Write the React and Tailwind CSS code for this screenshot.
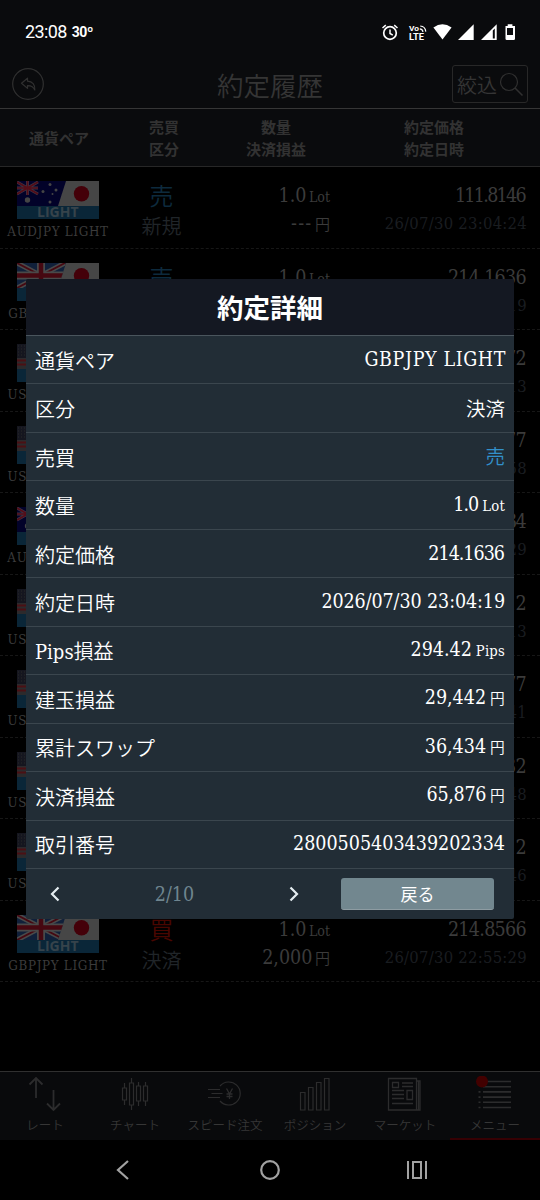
import { clsx } from 'clsx'

const SLAB = 'font-["Roboto_Slab","DejaVu_Serif_Condensed","DejaVu_Serif","Noto_Sans_CJK_JP",serif] [font-stretch:condensed]'

const HISTORY = [
  { base: 'AUD', side: '売', kind: '新規', profit: '---',   price: '111.8146', time: '26/07/30 23:04:24' },
  { base: 'GBP', side: '売', kind: '決済', profit: '65,876', price: '214.1636', time: '26/07/30 23:04:19' },
  { base: 'USD', side: '買', kind: '新規', profit: '---',   price: '162.4172', time: '26/07/30 23:04:13' },
  { base: 'USD', side: '売', kind: '決済', profit: '1,200', price: '162.4177', time: '26/07/30 23:03:58' },
  { base: 'AUD', side: '買', kind: '決済', profit: '3,400', price: '111.8134', time: '26/07/30 23:03:29' },
  { base: 'USD', side: '買', kind: '新規', profit: '---',   price: '162.4212', time: '26/07/30 23:03:13' },
  { base: 'USD', side: '売', kind: '決済', profit: '1,800', price: '162.4277', time: '26/07/30 23:02:41' },
  { base: 'USD', side: '買', kind: '新規', profit: '---',   price: '162.4232', time: '26/07/30 22:59:48' },
  { base: 'USD', side: '売', kind: '決済', profit: '2,100', price: '162.4312', time: '26/07/30 22:57:46' },
  { base: 'GBP', side: '買', kind: '決済', profit: '2,000', price: '214.8566', time: '26/07/30 22:55:29' },
]

const DETAILS = [
  { label: '通貨ペア', value: 'GBPJPY LIGHT', style: 'tracking-[0.6px] -mr-[1px]' },
  { label: '区分', value: '決済', style: 'pt-[3px]' },
  { label: '売買', value: '売', style: 'pt-[3px] text-[#3290ca]' },
  { label: '数量', value: '1.0', unit: 'Lot', style: 'tracking-[-0.9px]' },
  { label: '約定価格', value: '214.1636', style: 'tracking-[-1px] pr-[1px]' },
  { label: '約定日時', value: '2026/07/30 23:04:19', style: 'tracking-[-0.1px]' },
  { label: 'Pips損益', value: '294.42', unit: 'Pips' },
  { label: '建玉損益', value: '29,442', unit: '円' },
  { label: '累計スワップ', value: '36,434', unit: '円' },
  { label: '決済損益', value: '65,876', unit: '円', style: 'tracking-[-0.3px]' },
  { label: '取引番号', value: '2800505403439202334' },
]

function StatusBar() {
  return (
    <div className="h-[60px] flex items-center justify-between pl-[25px] pr-[25px] pt-[3px] text-white">
      <div className="flex items-center gap-[5px] font-[Roboto]">
        <span className="text-[18px] leading-5 tracking-[-0.6px]">23:08</span>
        <span className="text-[14px] leading-5 font-bold tracking-[-0.5px]">30º</span>
      </div>
      <svg width="134" height="18" viewBox="381 22 134 18" fill="none" stroke="#fff" className="shrink-0 overflow-visible">
        {/* alarm */}
        <circle cx="390" cy="32" r="6.3" strokeWidth="1.7" />
        <path d="M390 28.5v4l2.8 1.6M382.5 27l3.3-2.9M397.5 27l-3.3-2.9" strokeWidth="1.5" />
        {/* VoLTE */}
        <path d="M420.200 25q5 .2 5.600 5.600M419.800 27.800q2.700 .3 3.200 3" strokeWidth="1.200" />
        <text x="409" y="30.200" fontSize="8" textLength="10" lengthAdjust="spacingAndGlyphs" fontWeight="700" fontFamily="Roboto" fill="#fff" stroke="none">Vo</text>
        <text x="409" y="38.700" fontSize="9" textLength="15" lengthAdjust="spacingAndGlyphs" fontWeight="700" fontFamily="Roboto" fill="#fff" stroke="none">LTE</text>
        <path d="M433.400 26.500q9-6.600 18.200 0L442.500 38.500z" fill="#fff" stroke="none" />
        <path d="M458 39h15.700V23.300z" fill="#fff" stroke="none" />
        <path d="M481 39h15.700V23.300zM492.800 29.500v8h2v-10z" fill="#fff" fillRule="evenodd" stroke="none" />
        <path d="M505.500 25h2.200v-1.700h4.700V25h2.600v12.700q0 1.300-1.300 1.300h-6.900q-1.300 0-1.300-1.300zM507 27v7h6v-7z" fill="#fff" fillRule="evenodd" stroke="none" />
      </svg>
    </div>
  )
}

function Header() {
  return (
    <div className="h-[49px] flex items-center justify-between pl-3 pr-[12px] border-b border-[#363636] text-[#353535]">
      <svg width="32" height="32" viewBox="0 0 32 32" fill="none" stroke="#303030" className="w-[76px] -ml-[22px]">
        <circle cx="16" cy="16" r="15.300" strokeWidth="1.200" />
        <path d="M9.500 15.200l6-5v3c5 .2 7.700 3.600 7.300 8.800c-1.200-3-3.300-4.500-7.300-4.400v2.800z" strokeWidth="1.200" strokeLinejoin="round" />
      </svg>
      <h1 className="text-[26.500px] leading-none font-[350] pl-[22px] pt-[2px]">約定履歴</h1>
      <button className="w-[76px] h-[38px] shrink-0 flex items-center justify-between pl-1 pr-[3px] border border-[#282828] rounded-[3px]">
        <span className="text-[20px] leading-none font-[350] pt-[2px] whitespace-nowrap">絞込</span>
        <svg width="25" height="25" viewBox="0 0 25 25" fill="none" stroke="#303030" strokeWidth="1.200">
          <circle cx="10" cy="10" r="8.500" />
          <path d="M16 16l7.500 7.500" strokeWidth="1.600" />
        </svg>
      </button>
    </div>
  )
}

function UnionJack() {
  return (
    <>
      <path d="M0 0h58v25H0z" fill="#10203a" />
      <path d="M0 0l48 25M48 0L0 25" stroke="#494949" strokeWidth="5" />
      <path d="M0 0l48 25M48 0L0 25" stroke="#460811" strokeWidth="1.800" />
      <path d="M24 0v25M0 12.500h58" stroke="#494949" strokeWidth="8" />
      <path d="M24 0v25M0 12.500h58" stroke="#460811" strokeWidth="4.500" />
    </>
  )
}

function Flag({ base }) {
  const clip = `flag-${base}`
  return (
    <svg width="82" height="38" viewBox="0 0 82 38" className="overflow-visible">
      <defs>
        <clipPath id={clip}><path d="M0 0h49l-8 25H0z" /></clipPath>
      </defs>
      <path d="M0 0h82v25H0z" fill="#464646" />
      <circle cx="64.500" cy="12.700" r="7.700" fill="#440009" />
      <g clipPath={`url(#${clip})`}>
        {base === 'GBP' && <UnionJack />}
        {base === 'AUD' && (
          <>
            <path d="M0 0h52v25H0z" fill="#020229" />
            <path d="M0 1l21 12M21 1L0 13M10.500 0v14M0 7h21" stroke="#3d3545" strokeWidth="3" />
            <path d="M0 1l21 12M21 1L0 13M10.500 0v14M0 7h21" stroke="#540d18" strokeWidth="1.600" />
            <circle cx="10.500" cy="19" r="2.700" fill="#454545" />
            <g fill="#454545">
              <circle cx="26" cy="10.500" r="1.500" /><circle cx="33" cy="3.500" r="1.500" />
              <circle cx="39" cy="9" r="1.500" /><circle cx="33" cy="21" r="1.500" />
              <circle cx="35.500" cy="13" r="1" />
            </g>
          </>
        )}
        {base === 'USD' && (
          <>
            <path d="M0 0h52v25H0z" fill="#2c2a2c" />
            <path d="M0 16.500h52M0 20.500h52" stroke="#4b1014" strokeWidth="1.800" />
            <path d="M24 2h28M24 6h28M24 10h28" stroke="#4b1014" strokeWidth="1.800" />
            <path d="M0 0h24v14H0z" fill="#15161f" />
            <path d="M1 2h22M1 5h22M1 8h22M1 11h22" stroke="#292929" strokeDasharray="1 2" />
          </>
        )}
      </g>
      <path d="M0 25h82v13H0z" fill="#0a2638" />
      <text x="20" y="36.300" textLength="41.500" lengthAdjust="spacingAndGlyphs" fontSize="14.500" fontWeight="700" fontFamily="Open Sans" fill="#36434b">LIGHT</text>
    </svg>
  )
}

function HistoryRow({ row }) {
  return (
    <div className="h-[81.5px] grid grid-cols-[116px_91px_123px_1fr] border-b border-dashed border-[#171717] text-[#3b3b3b]">
      <div className="flex flex-col items-center pt-[14px]">
        <Flag base={row.base} />
        <span className={clsx(SLAB, 'text-[13.3px] leading-[16px] mt-[5px] tracking-[0.65px] whitespace-nowrap')}>{row.base}JPY LIGHT</span>
      </div>
      <div className="flex flex-col items-center pt-[15px]">
        <span className={clsx('text-[24px] leading-[26px] font-[350]', row.side === '売' ? 'text-[#0d2a3d]' : 'text-[#490600]')}>{row.side}</span>
        <span className="text-[20px] leading-5 mt-2 font-[350] text-[#202529]">{row.kind}</span>
      </div>
      <div className={clsx(SLAB, 'flex flex-col items-end pt-[17px] text-[19.5px] leading-6')}>
        <span>1.0 <span className="text-[14px] -ml-[3px]">Lot</span></span>
        <span className="mt-[3px] font-[350]">
          <span className={clsx(row.profit === '---' && 'tracking-[1.200px]')}>{row.profit}</span>
          {' '}<span className="text-[15px] -ml-[3px]">円</span>
        </span>
      </div>
      <div className={clsx(SLAB, 'flex flex-col items-end pr-[13px] pt-[17px]')}>
        <span className={clsx('text-[19.5px] leading-6', row.price.startsWith('111') ? 'tracking-[-1.700px] pr-[2px]' : 'tracking-[-0.700px] pr-[1px]')}>{row.price}</span>
        <span className="text-[16.5px] leading-6 mt-1 tracking-[0.25px] text-[#1a1d20]">{row.time}</span>
      </div>
    </div>
  )
}

function DetailModal() {
  return (
    <div className="absolute left-[26px] top-[279px] w-[488px] h-[640px] bg-[#222d36] text-white rounded-[2px] overflow-hidden flex flex-col">
      <h2 className="h-[57px] shrink-0 flex items-center justify-center bg-[#141822] border-b border-[#4a555d] text-[26.500px] font-bold">約定詳細</h2>
      <div className="h-[533px] grid grid-rows-11">
        {DETAILS.map((d) => (
          <div key={d.label} className="flex items-center justify-between pt-[2px] pl-[9px] pr-[9px] border-b border-[#3b464e] whitespace-nowrap">
            <span className={clsx(SLAB, 'text-[20px] leading-6 font-[350] pt-[2px]')}>{d.label}</span>
            <span className={clsx(SLAB, 'text-[19.5px] leading-6 -mt-[2px] font-[350]', d.style)}>
              {d.value}
              {d.unit && <span className="text-[14.700px] ml-1 tracking-[0.200px]">{d.unit}</span>}
            </span>
          </div>
        ))}
      </div>
      <div className="flex-1 flex items-center pl-[24px] pr-5">
        <svg width="10" height="16" viewBox="0 0 10 16" fill="none" stroke="#e5edf1" strokeWidth="2.200"><path d="M8.500 1.500L2 8l6.500 6.500" /></svg>
        <span className={clsx(SLAB, 'w-[229px] text-center text-[19.5px] pt-[2px] text-[#6f858f]')}>2/10</span>
        <svg width="10" height="16" viewBox="0 0 10 16" fill="none" stroke="#e5edf1" strokeWidth="2.200"><path d="M1.500 1.500L8 8l-6.500 6.500" /></svg>
        <button className="ml-auto w-[153px] h-[32px] rounded-[3px] bg-[#72878f] border-b border-[#8e9ca2] text-[17px] leading-none">戻る</button>
      </div>
    </div>
  )
}

const TABS = [
  { label: 'レート', icon: (
    <path d="M11 22V2M4.500 8.500L11 2l6.500 6.500M28.500 14v20M22 27.500l6.500 6.500 6.500-6.500" strokeWidth="1.800" />
  ) },
  { label: 'チャート', icon: (
    <path d="M7.500 12h4v12h-4zM9.500 7v5M9.500 24v5M14.500 7h4v22h-4zM16.500 2v5M16.500 29v5M21.500 10h4v15h-4zM23.500 6v4M23.500 25v5M28.500 10h4v15h-4zM30.500 6v4M30.500 25v5" />
  ) },
  { label: 'スピード注文', icon: (
    <>
      <path d="M15 10a11.500 11.500 0 1 1 0 15M3 13.500h12M6.500 17.500h11M3 21.500h12" />
      <path d="M21.500 12.500l3 5.500 3-5.500M24.500 18v5M21.500 18h6M21.500 20.500h6" strokeWidth="1.300" />
    </>
  ) },
  { label: 'ポジション', icon: (
    <path d="M5.500 16.500h4.500v17.500H5.500zM13.500 11.500H18V34h-4.500zM21.500 6.500H26V34h-4.500zM29.500 2.500H34V34h-4.500z" />
  ) },
  { label: 'マーケット', icon: (
    <path d="M3.500 2.500h28V34h-28zM32 5h3v29H31M33.500 5v29M7.500 6.500h6v5h-6zM17 7h11M17 10.500h11M7 14.500h12M7 18.500h12M7 22.500h12M22 14.500h5.500v9H22zM7 27.500h21" strokeWidth="1.300" />
  ) },
  { label: 'メニュー', icon: (
    <>
      <path d="M8 5.500h28M8 10.700h28M8 15.900h28M8 21.100h28M8 26.300h28M8 31.500h28" strokeWidth="1.600" />
      <path d="M3.500 15.900h2M3.500 21.100h2M3.500 26.300h2M3.500 31.500h2" strokeWidth="1.600" />
      <circle cx="7" cy="5.500" r="6" fill="#420000" stroke="none" />
    </>
  ) },
]

function TabBar() {
  return (
    <nav className="h-[69px] grid grid-cols-6 bg-[#090a0c] border-t border-[#303030]">
      {TABS.map((tab, i) => (
        <div key={tab.label} className={clsx('flex flex-col items-center pt-1', i === 5 && 'border-b-2 border-[#360003]')}>
          <svg width="40" height="36" viewBox="0 0 40 36" fill="none" stroke="#2c2c2d" strokeWidth="1.200">{tab.icon}</svg>
          <span className="text-[12.5px] leading-4 mt-[5px] font-[350] text-[#363636] whitespace-nowrap">{tab.label}</span>
        </div>
      ))}
    </nav>
  )
}

export default function App() {
  return (
    <div className="relative w-[540px] h-[1200px] overflow-hidden bg-black flex flex-col font-['Noto_Sans_CJK_JP',sans-serif]">
      <div className="bg-[#0a0b0d]">
        <StatusBar />
        <Header />
        <div className="h-[58px] grid grid-cols-[118px_92px_132px_1fr] items-center border-b border-[#272727] text-[15px] leading-[22px] font-bold text-center text-[#323232]">
          <span>通貨ペア</span>
          <span>売買<br />区分</span>
          <span>数量<br />決済損益</span>
          <span className="pr-[14px]">約定価格<br />約定日時</span>
        </div>
      </div>

      <div className="flex-1">
        {HISTORY.map((row) => <HistoryRow key={row.time} row={row} />)}
      </div>

      <TabBar />

      {/* Android navigation */}
      <div className="h-[60px] flex items-center justify-between pl-[113px] pr-[113px]">
        <svg width="20" height="22" viewBox="0 0 20 22" fill="none" stroke="#a2a2a2" strokeWidth="2.200"><path d="M15 2L5 11l10 9" /></svg>
        <svg width="22" height="22" viewBox="0 0 22 22" fill="none" stroke="#a2a2a2" strokeWidth="2.200"><circle cx="11" cy="11" r="8.800" /></svg>
        <svg width="20" height="22" viewBox="0 0 20 22" fill="none" stroke="#a2a2a2" strokeWidth="2"><path d="M1 2v18M19 2v18M6 3h8v16H6z" /></svg>
      </div>

      <DetailModal />
    </div>
  )
}
